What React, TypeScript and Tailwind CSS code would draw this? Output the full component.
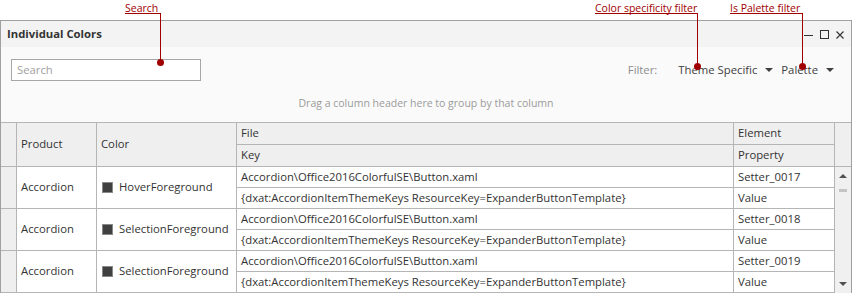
import React from "react";

const font = { fontFamily: '"Open Sans", "Noto Sans", sans-serif' };

const rows = [
  { product: "Accordion", color: "HoverForeground", element: "Setter_0017" },
  { product: "Accordion", color: "SelectionForeground", element: "Setter_0018" },
  { product: "Accordion", color: "SelectionForeground", element: "Setter_0019" },
];

function Callout({ label, left, width, drop }: { label: string; left: number; width: number; drop: number }) {
  return (
    <div className="absolute top-0 text-[10.5px] text-[#a00000]" style={{ left, width }}>
      <div className="h-[14px] leading-[14px] border-b border-[#a00000] whitespace-nowrap pt-px">{label}</div>
      <div className="absolute right-0 top-[14px] w-px bg-[#a00000]" style={{ height: drop }} />
      <div className="absolute right-[-3px] w-[7px] h-[7px] rounded-full bg-[#a00000]" style={{ top: 14 + drop - 3 }} />
    </div>
  );
}

function Caret() {
  return <span className="inline-block w-0 h-0 border-l-[4px] border-r-[4px] border-t-[4px] border-l-transparent border-r-transparent border-t-[#404040] ml-[8px]" />;
}

function Cell({ children, className = "" }: { children?: React.ReactNode; className?: string }) {
  return (
    <div className={`flex items-center px-[4px] border-r border-b border-[#b5b5b5] whitespace-nowrap overflow-hidden ${className}`}>
      {children}
    </div>
  );
}

export default function App() {
  return (
    <div className="relative w-[852px] h-[293px] bg-white text-[11.3px] text-[#333333] overflow-hidden" style={font}>
      <div className="h-[20px]" />
      <div className="border-t border-x border-[#a0a0a0] bg-[#fafafa] h-[273px]">
        {/* title bar */}
        <div className="h-[26px] bg-[#f3f3f3] flex items-center justify-between pl-[6px] pr-[7px]">
          <span className="font-bold text-[#333333]">Individual Colors</span>
          <div className="flex items-center gap-[7px] pt-px">
            <svg width="9" height="9" viewBox="0 0 9 9"><line x1="0" y1="5.5" x2="9" y2="5.5" stroke="#333" strokeWidth="1" /></svg>
            <svg width="9" height="9" viewBox="0 0 9 9"><rect x="0.5" y="0.5" width="8" height="8" fill="none" stroke="#333" strokeWidth="1" /></svg>
            <svg width="8" height="8" viewBox="0 0 8 8"><path d="M0.5 0.5L7.5 7.5M7.5 0.5L0.5 7.5" stroke="#333" strokeWidth="1.1" /></svg>
          </div>
        </div>
        {/* toolbar */}
        <div className="flex items-center justify-between pt-[12px] pl-[10px] pr-[17px]">
          <div className="w-[190px] h-[22px] border border-[#a6a6a6] bg-white flex items-center pl-[5px] text-[#a0a0a0]">Search</div>
          <div className="flex items-center">
            <span className="text-[#8c8c8c] mr-[21px]">Filter:</span>
            <span className="flex items-center text-[#404040]">Theme Specific<Caret /></span>
            <span className="flex items-center text-[#404040] ml-[8px]">Palette<Caret /></span>
          </div>
        </div>
        <div className="h-[41px] flex items-center justify-center text-[10.5px] text-[#9a9a9a] pt-[4px]">
          Drag a column header here to group by that column
        </div>
        {/* grid */}
        <div className="grid grid-cols-[16px_80px_140px_497px_101px_16px] grid-rows-[22px_22px_21px_21px_21px_21px_21px_21px] border-t border-[#b5b5b5]">
          <Cell className="row-span-2 bg-[#efefef]" />
          <Cell className="row-span-2 bg-[#efefef]">Product</Cell>
          <Cell className="row-span-2 bg-[#efefef]">Color</Cell>
          <Cell className="bg-[#efefef]">File</Cell>
          <Cell className="bg-[#efefef]">Element</Cell>
          <div className="row-span-2 bg-[#efefef] border-b border-[#b5b5b5]" />
          <Cell className="bg-[#efefef]">Key</Cell>
          <Cell className="bg-[#efefef]">Property</Cell>
          {rows.map((r, i) => (
            <React.Fragment key={i}>
              <Cell className="row-span-2 bg-[#efefef]" />
              <Cell className="row-span-2 bg-white">{r.product}</Cell>
              <Cell className="row-span-2 bg-white">
                <span className="w-[11px] h-[11px] bg-[#404040] border border-[#8a8a8a] mr-[6px] ml-[1px] shrink-0" />
                {r.color}
              </Cell>
              <Cell className="bg-white">Accordion\Office2016ColorfulSE\Button.xaml</Cell>
              <Cell className="bg-white">{r.element}</Cell>
              {i === 0 && (
                <div className="row-span-6 bg-[#f0f0f0] flex flex-col items-center pt-[7px] pb-[7px]">
                  <span className="w-0 h-0 border-l-[4px] border-r-[4px] border-b-[4px] border-l-transparent border-r-transparent border-b-[#505050]" />
                  <span className="w-[8px] h-[3px] bg-[#c4c4c4] mt-[11px]" />
                  <span className="flex-1" />
                  <span className="w-0 h-0 border-l-[4px] border-r-[4px] border-t-[4px] border-l-transparent border-r-transparent border-t-[#505050]" />
                </div>
              )}
              <Cell className="bg-white">{"{dxat:AccordionItemThemeKeys ResourceKey=ExpanderButtonTemplate}"}</Cell>
              <Cell className="bg-white">Value</Cell>
            </React.Fragment>
          ))}
        </div>
      </div>

      <Callout label="Search" left={125} width={36} drop={48} />
      <Callout label="Color specificity filter" left={595} width={103} drop={52} />
      <Callout label="Is Palette filter" left={730} width={73} drop={52} />
    </div>
  );
}
